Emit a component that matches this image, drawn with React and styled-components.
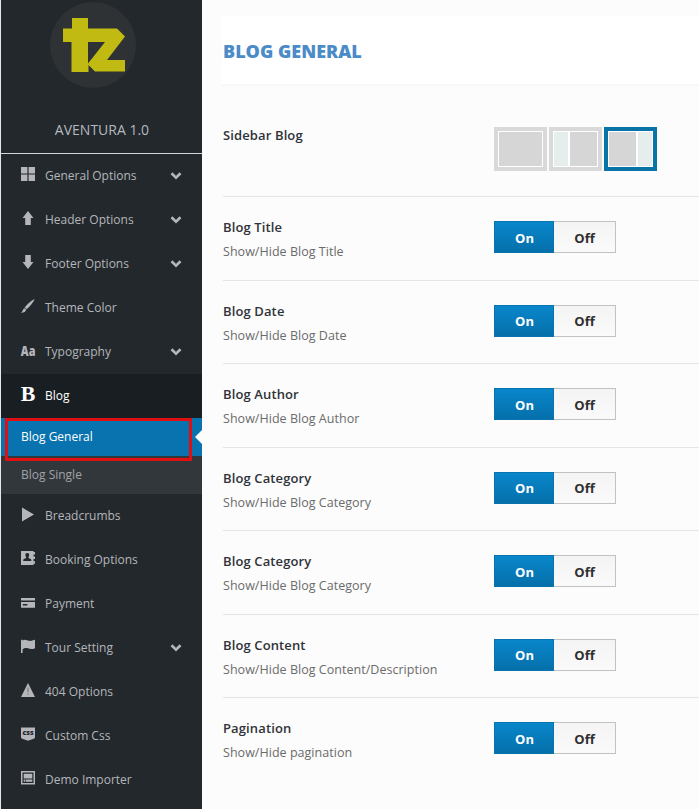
import React from "react";
import styled, { createGlobalStyle } from "styled-components";

const GlobalStyle = createGlobalStyle`
  * { box-sizing: border-box; }
  body { margin: 0; background: #fcfcfc; font-family: "Open Sans", sans-serif; overflow: hidden; }
`;

const Page = styled.div`
  display: flex;
  width: 699px;
  height: 809px;
  overflow: hidden;
  background: #fcfcfc;
`;

const Sidebar = styled.aside`
  flex: none;
  display: flex;
  flex-direction: column;
  width: 202px;
  border-left: 1px solid #e4e6e8;
  background: #23282d;
`;

const Brand = styled.header`
  display: flex;
  flex-direction: column;
  align-items: center;
  height: 154px;
  padding-top: 2px;
  border-bottom: 1px solid #d4d6d8;
`;

const Logo = styled.svg`
  width: 86px;
  height: 86px;
  margin-right: 17px;
`;

const ThemeName = styled.div`
  margin: 32px 0 0 1px;
  font-size: 14px;
  line-height: 20px;
  color: #b4b9be;
`;

const MenuItem = styled.a`
  display: flex;
  flex: none;
  align-items: center;
  height: 44px;
  padding: 0 20px;
  font-size: 12px;
  color: ${(p) => (p.$active ? "#fff" : "#b4b6b9")};
  background: ${(p) => (p.$active ? "#191e23" : "transparent")};
`;

const Icon = styled.svg`
  flex: none;
  width: 14px;
  height: 14px;
  margin: -4px 10px 0 0;
  fill: currentColor;
  overflow: visible;
`;

const MenuLabel = styled.span`
  flex: 1;
  padding-bottom: 1px;
  white-space: nowrap;
`;

const Chevron = styled.svg`
  width: 12px;
  height: 8px;
  fill: none;
  stroke: #b4b6b9;
  stroke-width: 2.6;
`;

const SubItem = styled.a`
  position: relative;
  display: flex;
  flex: none;
  align-items: center;
  height: 38px;
  padding: 0 0 1px 20px;
  font-size: 12px;
  color: ${(p) => (p.$active ? "#fff" : "#a0a3a6")};
  background: ${(p) => (p.$active ? "#0873ae" : "#32373c")};
`;

const Pointer = styled.i`
  position: absolute;
  right: 0;
  top: 12px;
  border: solid transparent;
  border-width: 7px 7px 7px 0;
  border-right-color: #fcfcfc;
`;

const Highlight = styled.i`
  position: absolute;
  z-index: 1;
  left: 4px;
  top: 0;
  width: 187px;
  height: 43px;
  border: 3px solid #e00f12;
`;

const Content = styled.main`
  flex: 1;
  min-width: 0;
  padding: 16px 0 0 20px;
`;

const TitleBar = styled.header`
  display: flex;
  align-items: center;
  height: 70px;
  padding: 2px 0 0 1px;
  background: #fff;
  border-bottom: 2px solid #f8f8f8;
`;

const Title = styled.h1`
  margin: 0;
  font-size: 18px;
  line-height: 24px;
  font-weight: 800;
  color: #4a8bc8;
`;

const OptionRow = styled.section`
  display: grid;
  grid-template-columns: 271px 1fr;
  align-items: start;
  height: ${(p) => (p.$first ? "110px" : "83.5px")};
  margin-left: 1px;
  padding-top: ${(p) => (p.$first ? "39px" : "20px")};
  border-top: ${(p) => (p.$first ? "0" : "1px solid #e5e5e5")};
`;

const OptionName = styled.div`
  font-size: 13px;
  line-height: 20px;
  font-weight: 600;
  letter-spacing: 0.12px;
  color: #2f3338;
`;

const OptionHint = styled.div`
  margin-top: 5px;
  font-size: 12.5px;
  line-height: 20px;
  letter-spacing: 0.03px;
  color: #6b6b6b;
`;

const Toggle = styled.div`
  display: flex;
  width: 122px;
  height: 32px;
  margin-top: 4px;
`;

const ToggleButton = styled.button`
  width: ${(p) => (p.$on ? "60px" : "62px")};
  height: 32px;
  padding: ${(p) => (p.$on ? "1px 0 0 1px" : "1px 0 0")};
  border: 1px solid ${(p) => (p.$on ? "#0874ad" : "#c2c2c2")};
  border-left-width: ${(p) => (p.$on ? "1px" : "0")};
  background: ${(p) =>
    p.$on ? "linear-gradient(#0986cb, #0570aa)" : "linear-gradient(#f4f4f4, #fafafa)"};
  font: 700 13px "Open Sans", sans-serif;
  color: ${(p) => (p.$on ? "#fff" : "#2f2f2f")};
`;

const LayoutChoices = styled.div`
  display: flex;
  gap: 2px;
  margin-top: 2px;
`;

const LayoutChoice = styled.div`
  display: flex;
  gap: 2px;
  width: 53px;
  height: 44px;
  padding: 1px;
  border: 4px solid ${(p) => (p.$selected ? "#0873a6" : "#d9d9d9")};
  background: #fff;
`;

const LayoutPane = styled.span`
  flex: ${(p) => (p.$side ? "0 0 14px" : "1")};
  background: ${(p) => (p.$side ? "#e6eeed" : "#d6d6d6")};
`;

const icons = {
  grid: <path d="M0 0h6.4v6.4H0zM7.6 0H14v6.4H7.6zM0 7.6h6.4V14H0zM7.6 7.6H14V14H7.6z" />,
  up: <path d="M7 0l5.5 7H9.8v7H4.2V7H1.5z" />,
  down: <path d="M7 14l5.5-7H9.8V0H4.2v7H1.5z" />,
  brush: (
    <path d="M13.800 0C10 1.800 5.800 5 3.400 9c.8 0 1.700.5 2.200 1.300C8.700 8 11.800 4.200 13.800 0zM3 9.300C1.900 10.200 1.800 12.500 0 13.800c2.400.2 4.700-.8 5.200-3-.4-.8-1.300-1.400-2.200-1.500z" />
  ),
  type: (
    <text x="-.2" y="13.300" fontFamily="Open Sans" fontWeight="800" fontSize="14.500" textLength="14.600" lengthAdjust="spacingAndGlyphs">Aa</text>
  ),
  bold: (
    <text x="-.2" y="14.200" fontFamily="Liberation Serif" fontWeight="700" fontSize="21" textLength="14.600" lengthAdjust="spacingAndGlyphs">B</text>
  ),
  play: <path d="M1 .5l12 7-12 7z" />,
  book: (
    <>
      <path d="M0 0h12.500v14H0zM12.500 1H14v2.500h-1.500zM12.500 5.600H14v2.500h-1.500zM12.500 10.200H14v2.500h-1.500z" />
      <path fill="#23282d" d="M6.300 2c1.400 0 2 .9 1.900 2.100 0 1-.4 1.700-.8 2.100.1.900.7 1.100 1.700 1.500 1 .4 1.300.9 1.300 2.300H2.200c0-1.400.3-1.900 1.300-2.300 1-.4 1.600-.6 1.700-1.500-.4-.4-.8-1.100-.8-2.100C4.300 2.900 4.900 2 6.300 2z" />
    </>
  ),
  card: <path fillRule="evenodd" d="M0 3h14v2.500H0zM0 7h14v5.700H0zM1.800 9v1.400h4.600V9z" />,
  flag: <path d="M0 1l1.500-.6v1C4-.2 6 1.300 8 1.800c2 .5 4-.5 6-1v8.400c-2 .8-4 1.300-6.500.4-2.500-.8-4-.6-5.900.6V14H0z" />,
  alert: (
    <>
      <path d="M7 0l7 14H0z" />
      <path fill="#6d7073" d="M6.500 4.500h1v5h-1zM6.500 10.700h1V12h-1z" />
    </>
  ),
  css: (
    <>
      <path d="M0 .5h14v9.300c0 1.500-.7 2-2 2.300L7 13.800l-5-1.700c-1.300-.3-2-.8-2-2.300z" />
      <text x="1.400" y="8.300" fill="#23282d" fontFamily="Open Sans" fontWeight="800" fontSize="6.500" textLength="11.200" lengthAdjust="spacingAndGlyphs">css</text>
    </>
  ),
  demo: (
    <path fillRule="evenodd" d="M0 0h14v13.500H0zM1.500 1.500V12h11V1.500zM2.700 2.700h8.600v4.800H2.700zM2.700 8.600h1.700v2.200H2.700zM5 8.600h6.300v2.200H5z" />
  ),
};

const menuTop = [
  ["grid", "General Options", true],
  ["up", "Header Options", true],
  ["down", "Footer Options", true],
  ["brush", "Theme Color"],
  ["type", "Typography", true],
  ["bold", "Blog", false, true],
];

const menuBottom = [
  ["play", "Breadcrumbs"],
  ["book", "Booking Options"],
  ["card", "Payment"],
  ["flag", "Tour Setting", true],
  ["alert", "404 Options"],
  ["css", "Custom Css"],
  ["demo", "Demo Importer"],
];

const options = [
  ["Blog Title", "Show/Hide Blog Title"],
  ["Blog Date", "Show/Hide Blog Date"],
  ["Blog Author", "Show/Hide Blog Author"],
  ["Blog Category", "Show/Hide Blog Category"],
  ["Blog Category", "Show/Hide Blog Category"],
  ["Blog Content", "Show/Hide Blog Content/Description"],
  ["Pagination", "Show/Hide pagination"],
];

function Entry({ item: [icon, label, expandable, active] }) {
  return (
    <MenuItem $active={active}>
      <Icon viewBox="0 0 14 14">{icons[icon]}</Icon>
      <MenuLabel>{label}</MenuLabel>
      {expandable && (
        <Chevron viewBox="0 0 12 8">
          <path d="M1.500 1.300L6 5.700l4.500-4.400" />
        </Chevron>
      )}
    </MenuItem>
  );
}

export default function App() {
  return (
    <Page>
      <GlobalStyle />
      <Sidebar>
        <Brand>
          <Logo viewBox="0 0 86 86">
            <circle cx="43" cy="43" r="43" fill="#2e3234" />
            <path
              fill="#c1ba13"
              d="M22 16h16v10.500h29l8 8L57 58h18v11.500H45L38.500 63v7H21.500V40H13V26.500h9zM38 40v21.500L55 40z"
            />
          </Logo>
          <ThemeName>AVENTURA 1.0</ThemeName>
        </Brand>
        {menuTop.map((item) => (
          <Entry key={item[1]} item={item} />
        ))}
        <SubItem $active>
          Blog General
          <Pointer />
          <Highlight />
        </SubItem>
        <SubItem>Blog Single</SubItem>
        {menuBottom.map((item) => (
          <Entry key={item[1]} item={item} />
        ))}
      </Sidebar>
      <Content>
        <TitleBar>
          <Title>BLOG GENERAL</Title>
        </TitleBar>
        <OptionRow $first>
          <OptionName>Sidebar Blog</OptionName>
          <LayoutChoices>
            <LayoutChoice>
              <LayoutPane />
            </LayoutChoice>
            <LayoutChoice>
              <LayoutPane $side />
              <LayoutPane />
            </LayoutChoice>
            <LayoutChoice $selected>
              <LayoutPane />
              <LayoutPane $side />
            </LayoutChoice>
          </LayoutChoices>
        </OptionRow>
        {options.map(([name, hint], i) => (
          <OptionRow key={i}>
            <div>
              <OptionName>{name}</OptionName>
              <OptionHint>{hint}</OptionHint>
            </div>
            <Toggle>
              <ToggleButton $on>On</ToggleButton>
              <ToggleButton>Off</ToggleButton>
            </Toggle>
          </OptionRow>
        ))}
      </Content>
    </Page>
  );
}
